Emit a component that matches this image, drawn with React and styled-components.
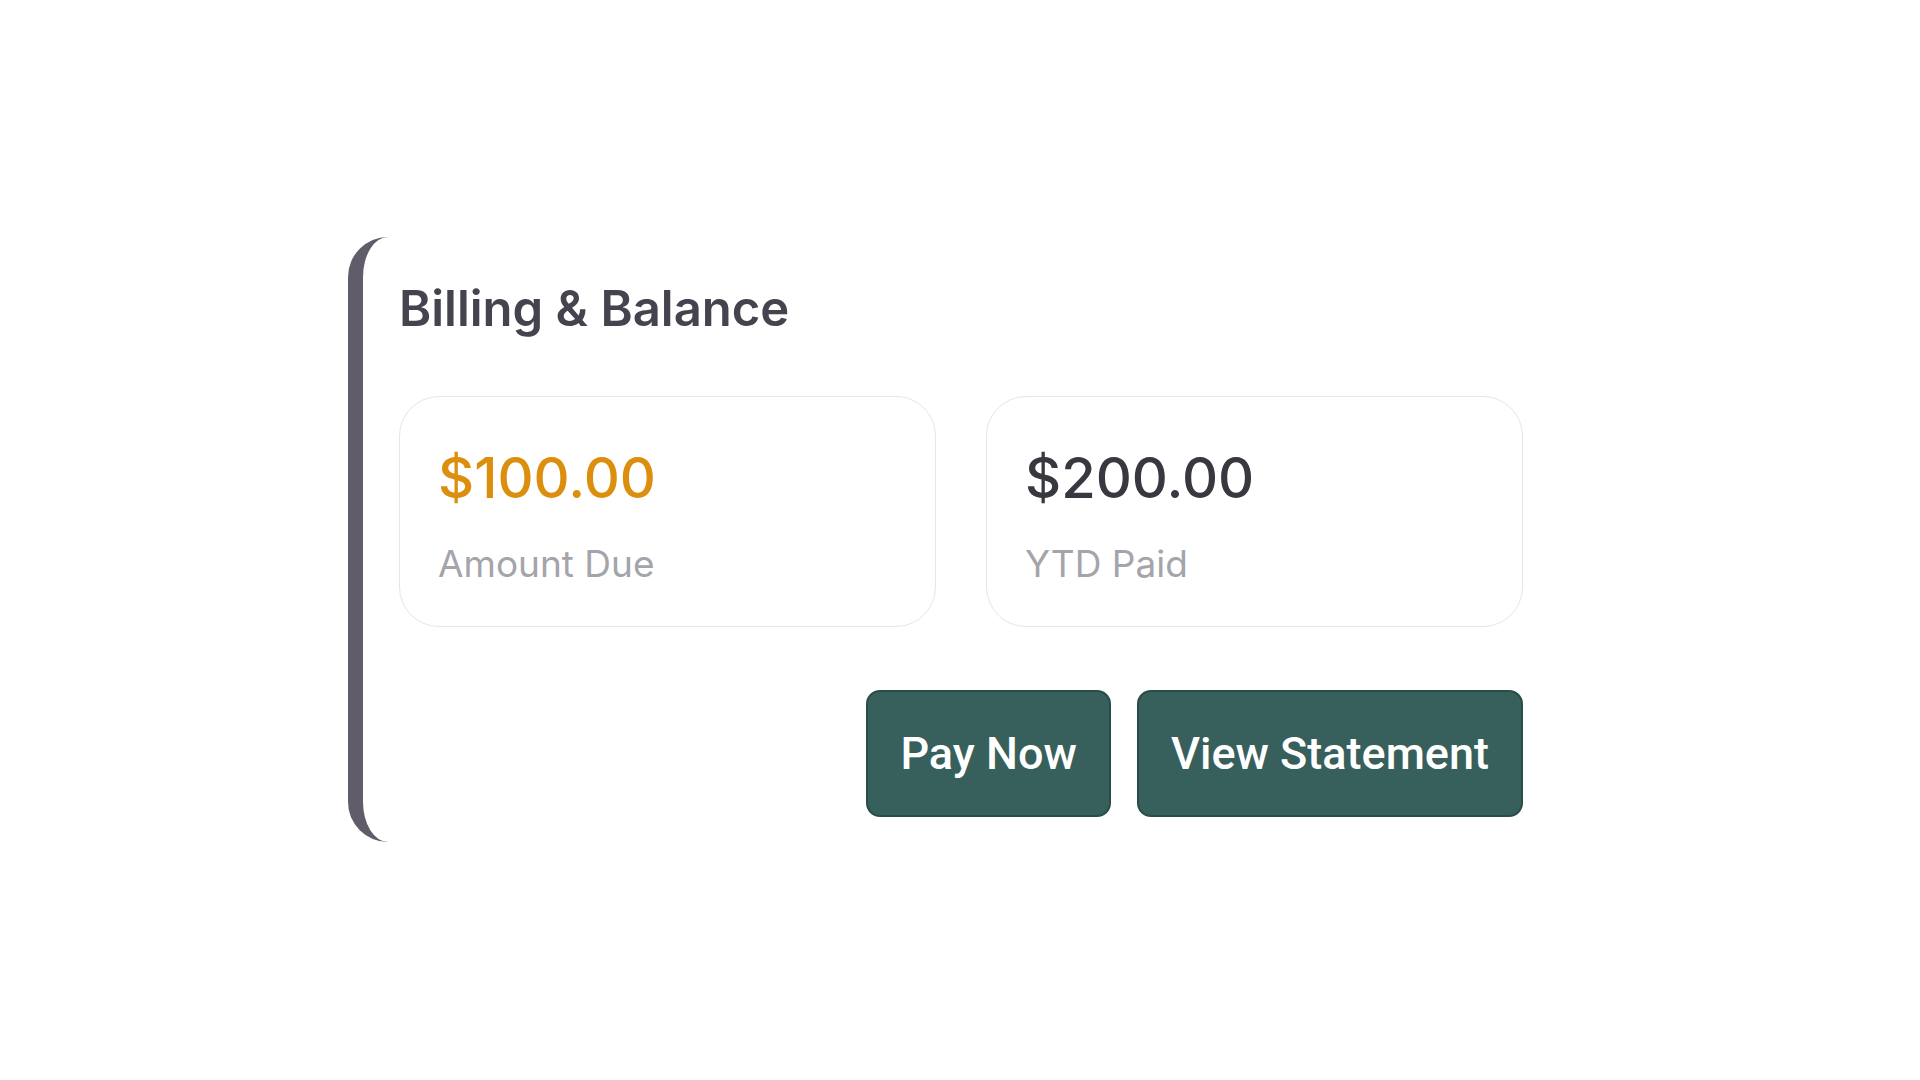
import React from "react";
import styled, { createGlobalStyle } from "styled-components";

const GlobalStyle = createGlobalStyle`
  html, body {
    margin: 0;
    padding: 0;
    background: #ffffff;
  }
  * {
    box-sizing: border-box;
  }
`;

const stats = [
  { amount: "$100.00", label: "Amount Due", tone: "#dc8f0e" },
  { amount: "$200.00", label: "YTD Paid", tone: "#383840" },
];

function App() {
  return (
    <>
      <GlobalStyle />
      <Page>
        <Panel>
          <Title>Billing &amp; Balance</Title>
          <StatsGrid>
            {stats.map((s) => (
              <StatCard key={s.label}>
                <Amount $tone={s.tone}>{s.amount}</Amount>
                <StatLabel>{s.label}</StatLabel>
              </StatCard>
            ))}
          </StatsGrid>
          <Actions>
            <ActionButton>Pay Now</ActionButton>
            <ActionButton>View Statement</ActionButton>
          </Actions>
        </Panel>
      </Page>
    </>
  );
}

const Page = styled.div`
  min-height: 100vh;
  display: flex;
  align-items: center;
  justify-content: center;
  font-family: Inter, "Noto Sans", sans-serif;
`;

const Panel = styled.section`
  width: 1224px;
  background: #ffffff;
  border-left: 15px solid #615c69;
  border-radius: 40px;
  padding: 43px 49px 25px 36px;
  margin-top: -2px;
`;

const Title = styled.h2`
  margin: 0;
  font-size: 49px;
  font-weight: 600;
  color: #45434e;
  line-height: 58px;
`;

const StatsGrid = styled.div`
  display: grid;
  grid-template-columns: 1fr 1fr;
  gap: 50px;
  margin-top: 58px;
`;

const StatCard = styled.div`
  height: 231px;
  border: 1px solid #e6e6e8;
  border-radius: 40px;
  padding: 48px 40px 40px 38px;
  display: flex;
  flex-direction: column;
`;

const Amount = styled.div`
  font-size: 56px;
  font-weight: 500;
  line-height: 66px;
  color: ${(p) => p.$tone};
`;

const StatLabel = styled.div`
  margin-top: 30px;
  font-size: 37px;
  font-weight: 400;
  line-height: 45px;
  color: #a4a4ab;
`;

const Actions = styled.div`
  display: flex;
  justify-content: flex-end;
  gap: 26px;
  margin-top: 63px;
`;

const ActionButton = styled.button`
  height: 127px;
  padding: 0 32px;
  border: 2px solid #2b4d49;
  border-radius: 14px;
  background: #375f5b;
  color: #ffffff;
  font-family: Roboto, "Liberation Sans", sans-serif;
  font-size: 45px;
  font-weight: 500;
  cursor: pointer;
`;

export default App;
